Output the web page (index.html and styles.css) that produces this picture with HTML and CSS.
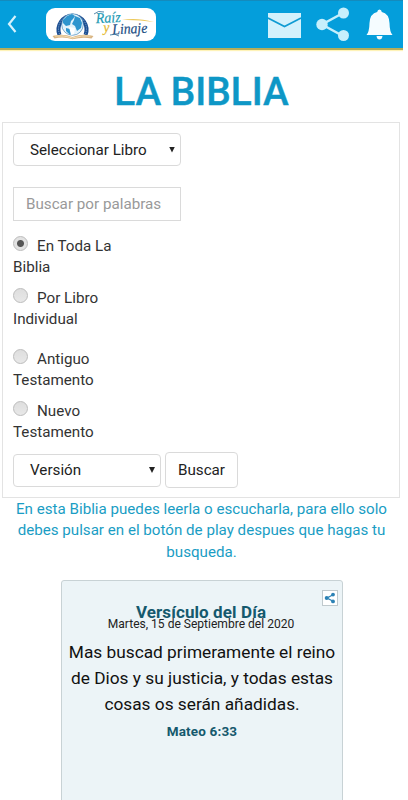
FILE: index.html
```html
<!DOCTYPE html>
<html lang="es">
<head>
<meta charset="utf-8">
<title>La Biblia</title>
<link rel="stylesheet" href="styles.css">
</head>
<body>
<div class="app">
  <header class="topbar">
    <svg class="back" width="12" height="20" viewBox="0 0 12 20"><path d="M9.500 2 3 10l6.500 8" fill="none" stroke="#d5f2fc" stroke-width="2.200"/></svg>
    <div class="logo">
      <svg width="110" height="33" viewBox="0 0 110 33">
        <path d="M13.500 27A14 14 0 1 1 39.500 27" fill="none" stroke="#1b4d91" stroke-width="4"/>
        <path d="M13.500 26A14 14 0 1 1 39.500 26" fill="none" stroke="#8fb5d8" stroke-width=".8" stroke-dasharray="1.200 1"/>
        <circle cx="26.500" cy="16.500" r="10.800" fill="#e3f3fb" stroke="#2d75ad" stroke-width=".6"/>
        <path d="M17 12l4-4 5-2 3 2-2 3-2 2-1 4-4 1-3-3zM29 8l5 2 2 5-1 5-4 3-2-5-3-2 2-4zM20 20l4 1 2 4-2 2-4-4z" fill="#2e95ce"/>
        <path d="M23 19l6 1-1 6-3 1z" fill="#fff"/>
        <path d="M6.500 28q10-3 20 1 10-4 21-1l-2 2.500q-9-2-19 .8-9-3-18-.8z" fill="#d9b583"/>
        <path d="M9 28q9-1 17.500 2 9-3 18-2" fill="none" stroke="#f3e0b8"/>
        <path d="M76 12q14-3 32 2-17-2.500-32-2z" fill="#edc95a"/>
        <g transform="rotate(-3 75 16)">
          <text class="script teal" x="50" y="14" textLength="25" lengthAdjust="spacingAndGlyphs">Raíz</text>
          <text class="script gold" x="57" y="23">y</text>
          <text class="script navy" x="66" y="26" textLength="35" lengthAdjust="spacingAndGlyphs">Linaje</text>
        </g>
        <path d="M64 27q5-2 9 1M48 6q4-4 10-2" fill="none" stroke="#2b6c99" stroke-width=".8"/>
      </svg>
    </div>
    <svg class="actions" width="126" height="36" viewBox="0 0 126 36">
      <path d="M0 8h33v25H0z" fill="#d2f1fc"/>
      <path d="M0 13 16.500 21.500 33 13" fill="none" stroke="#0e9bd3" stroke-width="1.600"/>
      <path d="M75 8 54 19.500 75 31" fill="none" stroke="#c6effc" stroke-width="2.500"/>
      <g fill="#c6effc"><circle cx="75.500" cy="8" r="5.500"/><circle cx="54" cy="19.500" r="5.700"/><circle cx="75.500" cy="30.500" r="5.500"/></g>
      <path d="M111.500 4.500q2 0 2.300 2.500 7.200 1.500 7.700 11 .2 9 3 12H98.500q2.800-3 3-12 .5-9.500 7.700-11 .3-2.500 2.300-2.500zM108.500 31h6q-.5 3.500-3 3.500t-3-3.500z" fill="#f5fcff"/>
    </svg>
  </header>
  <main>
    <h1>LA BIBLIA</h1>
    <form class="search">
      <div class="field select book"><span>Seleccionar Libro</span><i class="caret"></i></div>
      <div class="field query"><span>Buscar por palabras</span></div>
      <div class="options">
        <div class="option"><i class="radio on"></i>En Toda La<br>Biblia</div>
        <div class="option gap"><i class="radio"></i>Por Libro<br>Individual</div>
        <div class="option"><i class="radio"></i>Antiguo<br>Testamento</div>
        <div class="option"><i class="radio"></i>Nuevo<br>Testamento</div>
      </div>
      <div class="submit-row">
        <div class="field select version"><span>Versión</span><i class="caret"></i></div>
        <div class="button">Buscar</div>
      </div>
    </form>
    <p class="intro">En esta Biblia puedes leerla o escucharla, para ello solo<br>debes pulsar en el botón de play despues que hagas tu<br>busqueda.</p>
    <section class="verse">
      <div class="share"><svg width="12" height="12" viewBox="0 0 12 12"><path d="M9.500 2.500 3 6l6.500 3.500" fill="none" stroke="#2c82b5" stroke-width="1.300"/><g fill="#2c82b5"><circle cx="9" cy="2.600" r="1.900"/><circle cx="2.700" cy="6" r="2"/><circle cx="9" cy="9.400" r="1.900"/></g></svg></div>
      <h2>Versículo del Día</h2>
      <div class="date">Martes, 15 de Septiembre del 2020</div>
      <p class="text">Mas buscad primeramente el reino<br>de Dios y su justicia, y todas estas<br>cosas os serán añadidas.</p>
      <div class="ref">Mateo 6:33</div>
    </section>
  </main>
</div>
</body>
</html>
```
FILE: styles.css
```css
* { box-sizing: border-box; }
body { margin: 0; background: #fff; font-family: Roboto, sans-serif; color: #333; }
.app { width: 403px; height: 800px; overflow: hidden; }
.topbar { height: 50px; display: flex; align-items: flex-start; background: #049edb; border-top: 1px solid #148bbd; border-bottom: 2px solid #b5ad59; box-shadow: 0 1px 1px #fff3b8; }
.back { margin: 13px 0 0 6px; }
.logo { margin: 7px 0 0 28px; width: 110px; height: 33px; background: #fff; border-radius: 9px; }
.logo svg { display: block; }
.script { font-family: "Liberation Serif", serif; font-style: italic; font-size: 15px; stroke-width: .2px; }
.teal { fill: #1e9bb5; stroke: #1e9bb5; }
.gold { fill: #e5b72c; stroke: #e5b72c; font-size: 14px; }
.navy { fill: #214d83; stroke: #214d83; }
.actions { margin: 4px 0 0 112px; }
h1 { margin: 17px 0 0; height: 55px; line-height: 49px; font-size: 38.800px; font-weight: 500; -webkit-text-stroke: .4px #0e97c6; text-align: center; color: #0e97c6; white-space: nowrap; }
.search { margin: 0 3px 0 2px; height: 376px; padding: 10px 10px 0; border: 1px solid #e3e3e3; }
.field { width: 168px; height: 34px; border: 1px solid #dadada; display: flex; align-items: center; font-size: 15.200px; white-space: nowrap; }
.select { height: 33px; justify-content: space-between; padding: 0 5px 0 16px; border-radius: 4px; color: #222; }
.caret { width: 6px; height: 6px; background: #222; clip-path: polygon(0 0, 100% 0, 50% 100%); }
.query { margin-top: 21px; padding-left: 12px; color: #999; }
.options { margin-top: 14px; height: 217px; padding-top: 1px; }
.option { height: 51.500px; font-size: 15.200px; line-height: 21.400px; }
.option.gap { height: 61.500px; }
.radio { display: inline-block; width: 15px; height: 15px; margin-right: 9px; border: 1px solid #bcbcbc; border-radius: 50%; background: linear-gradient(#dedede, #e8e8e8); vertical-align: 0; }
.radio.on { background: radial-gradient(circle, #555 0 3px, #e2e2e2 4px); }
.submit-row { display: flex; align-items: center; gap: 4px; }
.version { width: 148px; }
.button { width: 73px; height: 36px; border: 1px solid #dadada; border-radius: 4px; text-align: center; line-height: 34px; font-size: 15.200px; color: #222; }
.intro { margin: 0; padding-top: 1px; text-align: center; font-size: 15.150px; line-height: 21.300px; color: #1a9dc4; white-space: nowrap; }
.verse { position: relative; margin: 17px 0 0 61px; width: 282px; height: 240px; padding-top: 21px; background: #ecf4f7; border: 1px solid #c8d2d5; border-radius: 3px; text-align: center; white-space: nowrap; }
.share { position: absolute; right: 4px; top: 9px; width: 16px; height: 16px; padding: 1px; border: 1px solid #bfc9cd; background: #fff; }
.share svg { display: block; }
h2 { margin: 0 2px 0 0; font-size: 17px; line-height: 20px; font-weight: 700; letter-spacing: .1px; color: #15596d; }
.date { font-size: 12.050px; line-height: 14px; margin: -5px 2px 0 0; color: #222; }
.text { margin: 8px 0 0; font-size: 17.300px; line-height: 26px; color: #111; }
.ref { margin-top: 5px; font-size: 13.500px; line-height: 18px; font-weight: 700; letter-spacing: .15px; color: #15596d; }
```
